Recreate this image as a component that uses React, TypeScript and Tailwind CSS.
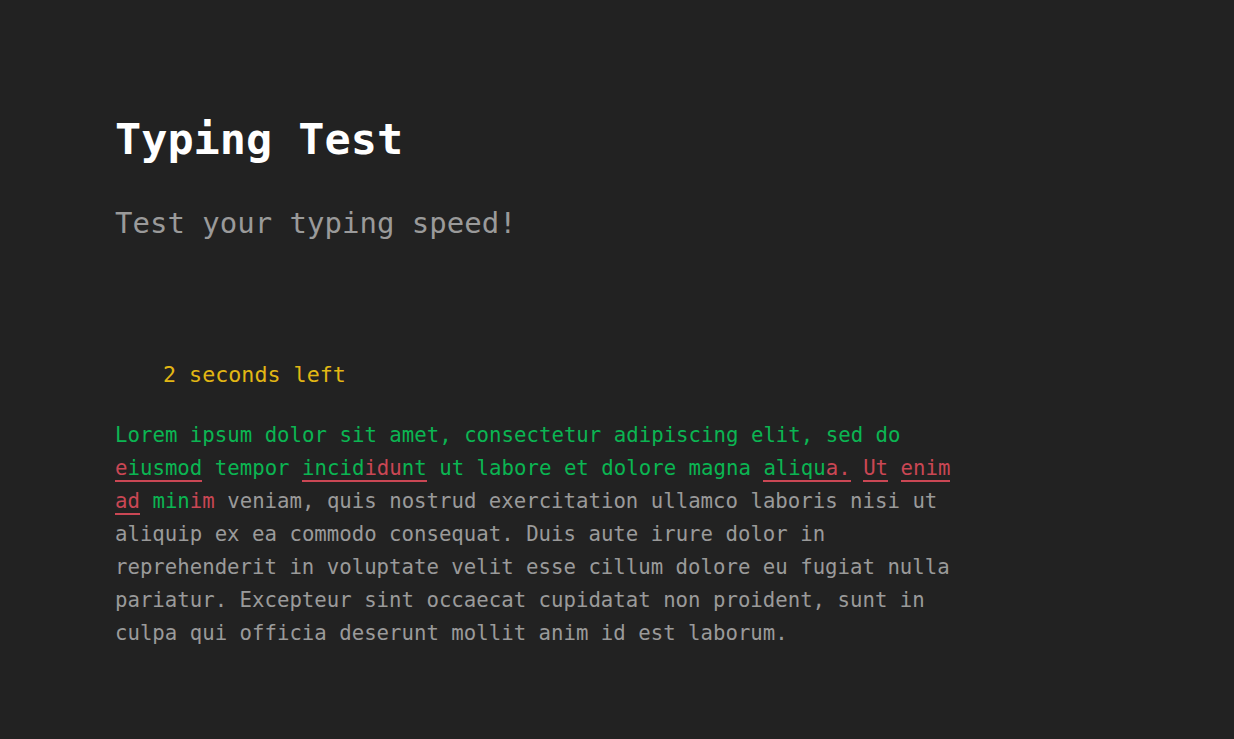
import React from 'react';

const TEXT =
  'Lorem ipsum dolor sit amet, consectetur adipiscing elit, sed do eiusmod tempor incididunt ut labore et dolore magna aliqua. Ut enim ad minim veniam, quis nostrud exercitation ullamco laboris nisi ut aliquip ex ea commodo consequat. Duis aute irure dolor in reprehenderit in voluptate velit esse cillum dolore eu fugiat nulla pariatur. Excepteur sint occaecat cupidatat non proident, sunt in culpa qui officia deserunt mollit anim id est laborum.';

// wrong letters per word index (typed part only)
const ERRORS: { [word: string]: number[] | 'all' } = {
  eiusmod: [0],
  incididunt: [5, 6, 7],
  'aliqua.': [5, 6],
  Ut: 'all',
  enim: 'all',
  ad: 'all',
};

const CURRENT = 'minim';
const CURRENT_ERRORS = [3, 4];

const Word: React.FC<{ word: string; state: 'done' | 'current' | 'todo' }> = ({ word, state }) => {
  if (state === 'todo') return <span className="text-[#9a9a9a]">{word}</span>;

  const errs = state === 'current' ? CURRENT_ERRORS : ERRORS[word];
  const isWrong = (i: number) => errs === 'all' || (Array.isArray(errs) && errs.includes(i));
  const underline = state === 'done' && errs !== undefined;

  return (
    <span className={underline ? 'border-b-2 border-[#ca4754]' : ''}>
      {word.split('').map((ch, i) => (
        <span key={i} className={isWrong(i) ? 'text-[#ca4754]' : 'text-[#0bb552]'}>
          {ch}
        </span>
      ))}
    </span>
  );
};

export default function App() {
  const words = TEXT.split(' ');
  const currentIdx = words.indexOf(CURRENT);

  return (
    <div className="min-h-screen bg-[#222222] pl-[115px] pt-[113px] font-['DejaVu_Sans_Mono',monospace]">
      <h1 className="h-[52px] text-[43.5px] leading-[52px] font-bold text-white">Typing Test</h1>
      <p className="mt-[38px] h-[40px] text-[29px] leading-[40px] text-[#9a9a9a]">Test your typing speed!</p>

      <div className="mt-[117px] pl-[48px] h-[30px] text-[21.7px] leading-[30px] text-[#e2b714]">2 seconds left</div>

      <p className="mt-[29px] w-[850px] text-[20.7px] leading-[33px]">
        {words.map((w, i) => (
          <React.Fragment key={i}>
            <Word word={w} state={i < currentIdx ? 'done' : i === currentIdx ? 'current' : 'todo'} />
            {i < words.length - 1 ? ' ' : ''}
          </React.Fragment>
        ))}
      </p>
    </div>
  );
}
